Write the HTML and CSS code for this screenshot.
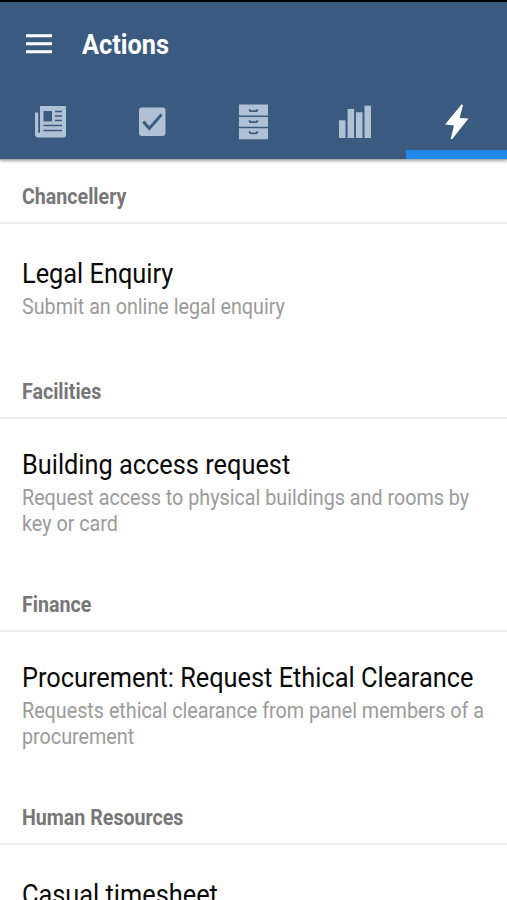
FILE: index.html
```html
<!DOCTYPE html>
<html lang="en">

<head>
    <meta charset="UTF-8">
    <meta name="viewport" content="width=device-width, initial-scale=1.0">
    <title>Actions</title>
    <link rel="stylesheet" href="styles.css">
</head>

<body>
    <header class="header">
        <div class="toolbar">
            <svg class="menu" width="26" height="20" viewBox="0 0 26 20" fill="#fff">
                <path d="M0 0.200h26v3H0zM0 8.200h26v3H0zM0 16.200h26v3H0z" />
            </svg>
            <h1 class="page-title">Actions</h1>
        </div>
        <nav class="tabs">
            <a class="tab">
                <svg width="34" height="36" viewBox="0 0 34 36">
                    <path d="M6 2H31a1 1 0 0 1 1 1V31.500a2 2 0 0 1-2 2H4.500a3.500 3.500 0 0 1-3.500-3.500V8.500h3.500v20h1.500z" fill="#b0c1d5" />
                    <path d="M5 8v20.500" stroke="#3b5a80" stroke-width="1.200" />
                    <path d="M9.500 7h8.500V17.500H9.500z" fill="#3b5a80" />
                    <path d="M21 7.500h7M21 12h7M21 16.500h7M9.500 21.500h18.500M9.500 26.500h18.500" stroke="#3b5a80" stroke-width="1.500" />
                </svg>
            </a>
            <a class="tab">
                <svg width="34" height="36" viewBox="0 0 34 36">
                    <rect x="4" y="3.500" width="26.500" height="28.500" rx="3" fill="#b0c1d5" />
                    <path d="M8.300 17.500l6 7L26.500 10.500" fill="none" stroke="#3b5a80" stroke-width="2.800" />
                </svg>
            </a>
            <a class="tab">
                <svg width="34" height="36" viewBox="0 0 34 36">
                    <path d="M3 0.500h29v11h-29zM3 13h29v9.700h-29zM3 24.200h29v11h-29z" fill="#b0c1d5" />
                    <path d="M13.500 5.200q0 2 2 2h4q2 0 2-2M13.500 16.200q0 2 2 2h4q2 0 2-2M13.500 27.300q0 2 2 2h4q2 0 2-2" fill="none" stroke="#3b5a80" stroke-width="1.700" />
                </svg>
            </a>
            <a class="tab">
                <svg width="34" height="36" viewBox="0 0 34 36">
                    <path d="M1 16.300h6.500V34H1zM9.600 5h6.500v29H9.600zM18 8.300h6.500V34H18zM26.500 1.800H33V34h-6.500z" fill="#b0c1d5" />
                </svg>
            </a>
            <a class="tab active">
                <svg width="34" height="36" viewBox="0 0 34 36">
                    <path d="M22.500 0.500L6 20.500l9 1-3.300 13.500h1.500L29.500 14.500l-8.800-.5L24 1z" fill="#fff" />
                </svg>
            </a>
        </nav>
    </header>

    <main class="list">
        <h2 class="section"><span>Chancellery</span></h2>
        <div class="item short">
            <p class="item-title"><span>Legal Enquiry</span></p>
            <p class="item-text"><span>Submit an online legal enquiry</span></p>
        </div>

        <h2 class="section"><span>Facilities</span></h2>
        <div class="item">
            <p class="item-title"><span>Building access request</span></p>
            <p class="item-text"><span>Request access to physical buildings and rooms by<br>key or card</span></p>
        </div>

        <h2 class="section"><span>Finance</span></h2>
        <div class="item">
            <p class="item-title"><span>Procurement: Request Ethical Clearance</span></p>
            <p class="item-text"><span>Requests ethical clearance from panel members of a<br>procurement</span></p>
        </div>

        <h2 class="section"><span>Human Resources</span></h2>
        <div class="item short">
            <p class="item-title"><span>Casual timesheet</span></p>
        </div>
    </main>
</body>

</html>
```

FILE: styles.css
```css
* {
    box-sizing: border-box;
    margin: 0;
    padding: 0;
}

body {
    height: 900px;
    overflow: hidden;
    display: flex;
    flex-direction: column;
    background: #fefefe;
    font-family: Roboto, sans-serif;
}

.header {
    flex: none;
    height: 159px;
    border-top: 2px solid #000;
    background: #3b5a80;
    box-shadow: 0 1px 0 #a9afb5, 0 2px 3px rgba(0, 0, 0, 0.35);
    z-index: 1;
}

.toolbar {
    display: flex;
    align-items: center;
    height: 83px;
    padding-left: 26px;
    gap: 30px;
}

.page-title {
    color: #fff;
    font-size: 27.500px;
    font-weight: 700;
    line-height: 32px;
    transform: scaleX(0.92);
    transform-origin: left;
    padding-top: 2px;
}

.tabs {
    display: grid;
    grid-template-columns: repeat(5, 1fr);
    height: 74px;
}

.tab {
    display: flex;
    justify-content: center;
    padding-top: 19px;
}

.active {
    border-bottom: 9px solid #2087e8;
}

.list {
    flex: 1;
    min-height: 0;
    overflow: hidden;
    padding-top: 1px;
}

/* condensed text */
.section span,
.item span {
    display: inline-block;
    white-space: nowrap;
    transform: scaleX(0.877);
    transform-origin: left;
}

.section {
    height: 64px;
    padding: 24px 22px 0;
    border-bottom: 2px solid #ebebeb;
    color: #777;
    font-size: 22px;
    font-weight: 700;
    line-height: 26px;
}

.section span {
    transform: scaleX(0.892);
}

.item {
    height: 149px;
    padding: 29px 22px 0;
}

.short {
    height: 131px;
    padding-top: 33px;
}

.item-title {
    color: #0a0a0a;
    font-size: 28px;
    line-height: 34px;
}

.item .item-title span {
    transform: scaleX(0.905);
}

.item-text {
    padding-top: 2px;
    color: #9b9b9b;
    font-size: 22.5px;
    line-height: 26px;
}
```
